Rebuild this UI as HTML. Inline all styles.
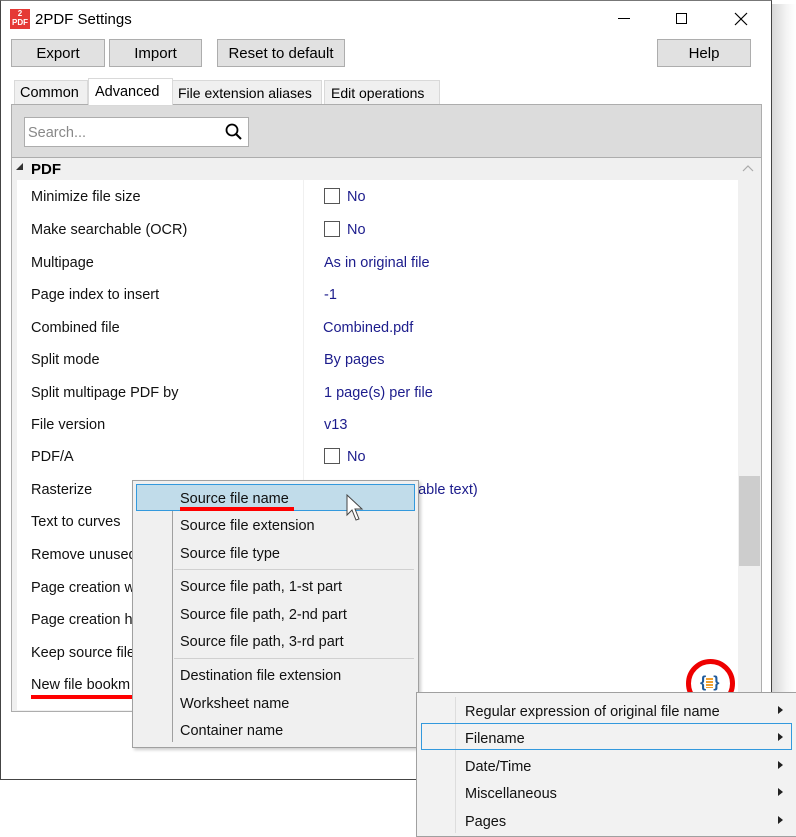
<!DOCTYPE html>
<html><head><meta charset="utf-8"><style>
*{box-sizing:border-box;margin:0;padding:0}
body{width:796px;height:837px;background:#fff;font-family:"Liberation Sans",sans-serif;font-size:14px;color:#000;position:relative;overflow:hidden}
.a{position:absolute;white-space:nowrap}
.win{left:0;top:0;width:772px;height:780px;border:1px solid #444;border-top-color:#777;background:#fff}
.shadow{left:772px;top:4px;width:24px;height:780px;background:linear-gradient(90deg,#d8d8d8,#f4f4f4 60%,#fff)}
.btn{background:#e1e1e1;border:1px solid #adadad;height:28px;top:39px;text-align:center;line-height:28px;font-size:15px}
.tab{top:80px;height:25px;background:#f0f0f0;border:1px solid #d9d9d9;line-height:24px;font-size:14.5px;padding:0 6px;overflow:hidden}
.row{left:31px;height:20px;line-height:22px;font-size:14.5px;color:#111}
.val{left:324px;height:20px;line-height:22px;font-size:14.5px;color:#1c1c8c}
.cb{width:16px;height:16px;border:1px solid #555;background:#fff;display:inline-block;vertical-align:-3px;margin-right:7px}
.mi{height:20px;line-height:22px;font-size:14.5px;color:#111}
.arr{width:0;height:0;border-left:5px solid #222;border-top:4px solid transparent;border-bottom:4px solid transparent}
</style></head><body>
<div class="a shadow"></div>
<div class="a win"></div>
<div class="a" style="left:10px;top:9px;width:20px;height:20px;background:#e53935;color:#fff;font-size:8px;line-height:9px;text-align:center;font-weight:bold">2<br>PDF</div>
<div class="a" style="left:35px;top:11px;font-size:15px">2PDF Settings</div>
<div class="a" style="left:618px;top:18px;width:12px;height:1px;background:#000"></div>
<div class="a" style="left:676px;top:13px;width:11px;height:11px;border:1px solid #000"></div>
<svg class="a" style="left:734px;top:12px" width="14" height="14"><path d="M1 1L13 13M13 1L1 13" stroke="#000" stroke-width="1.2"/></svg>
<div class="a btn" style="left:11px;width:94px">Export</div>
<div class="a btn" style="left:109px;width:93px">Import</div>
<div class="a btn" style="left:217px;width:128px">Reset to default</div>
<div class="a btn" style="left:657px;width:94px">Help</div>
<div class="a tab" style="left:14px;width:74px;padding:0 5px">Common</div>
<div class="a tab" style="left:88px;top:78px;height:28px;width:85px;background:#fff;z-index:2;line-height:27px">Advanced</div>
<div class="a tab" style="left:172px;width:150px;font-size:14px;padding:0 5px">File extension aliases</div>
<div class="a tab" style="left:324px;width:116px;font-size:14px">Edit operations</div>
<div class="a" style="left:11px;top:104px;width:751px;height:608px;border:1px solid #adadad;background:#f0f0f0"></div>
<div class="a" style="left:12px;top:105px;width:749px;height:53px;background:#dcdcdc;border-bottom:1px solid #adadad"></div>
<div class="a" style="left:24px;top:117px;width:225px;height:30px;background:#fff;border:1px solid #adadad;color:#888;font-size:14.5px;line-height:30px;padding-left:3px">Search...</div>
<svg class="a" style="left:225px;top:123px" width="18" height="18"><circle cx="7" cy="7" r="5.5" fill="none" stroke="#000" stroke-width="1.8"/><line x1="11" y1="11" x2="16" y2="16" stroke="#000" stroke-width="2"/></svg>
<div class="a" style="left:17px;top:180px;width:721px;height:530px;background:#fff"></div>
<div class="a" style="left:303px;top:180px;width:1px;height:530px;background:#f0f0f0"></div>
<div class="a" style="left:16px;top:163px;width:0;height:0;border-left:7px solid transparent;border-bottom:7px solid #333"></div>
<div class="a" style="left:31px;top:161px;font-weight:bold;font-size:15px">PDF</div>
<svg class="a" style="left:742px;top:165px" width="12" height="8"><path d="M1 6L6 1L11 6" fill="none" stroke="#aaa" stroke-width="1.2"/></svg>
<div class="a" style="left:739px;top:476px;width:21px;height:90px;background:#cdcdcd"></div>
<div class="a row" style="top:186px">Minimize file size</div>
<div class="a row" style="top:219px">Make searchable (OCR)</div>
<div class="a row" style="top:252px">Multipage</div>
<div class="a row" style="top:284px">Page index to insert</div>
<div class="a row" style="top:317px">Combined file</div>
<div class="a row" style="top:349px">Split mode</div>
<div class="a row" style="top:382px">Split multipage PDF by</div>
<div class="a row" style="top:414px">File version</div>
<div class="a row" style="top:446px">PDF/A</div>
<div class="a row" style="top:479px">Rasterize</div>
<div class="a row" style="top:511px">Text to curves</div>
<div class="a row" style="top:544px">Remove unused</div>
<div class="a row" style="top:577px">Page creation w</div>
<div class="a row" style="top:609px">Page creation h</div>
<div class="a row" style="top:642px">Keep source file</div>
<div class="a row" style="top:674px">New file bookm</div>
<div class="a" style="left:31px;top:695px;width:105px;height:4px;background:#f00"></div>
<div class="a val" style="top:186px"><span class="cb"></span>No</div>
<div class="a val" style="top:219px"><span class="cb"></span>No</div>
<div class="a val" style="top:252px">As in original file</div>
<div class="a val" style="top:284px">-1</div>
<div class="a val" style="top:317px;left:323px">Combined.pdf</div>
<div class="a val" style="top:349px">By pages</div>
<div class="a val" style="top:382px">1 page(s) per file</div>
<div class="a val" style="top:414px">v13</div>
<div class="a val" style="top:446px"><span class="cb"></span>No</div>
<div class="a val" style="top:479px;left:410px">hable text)</div>
<div class="a" style="left:686px;top:659px;width:49px;height:49px;border:5px solid #e00;border-radius:50%"></div>
<div class="a" style="left:700px;top:673px;font-size:16px;color:#1e5a9c;font-weight:bold;line-height:20px">{<span style="display:inline-block;width:7px;height:10px;background:repeating-linear-gradient(#f0a030 0 2px,transparent 2px 3px);vertical-align:-1px"></span>}</div>
<div class="a" style="left:132px;top:480px;width:287px;height:268px;background:#f0f0f0;border:1px solid #a0a0a0;box-shadow:2px 2px 3px rgba(0,0,0,.2)"></div>
<div class="a" style="left:172px;top:486px;width:1px;height:256px;background:#a0a0a0"></div>
<div class="a" style="left:136px;top:484px;width:279px;height:27px;background:#c1dcea;border:1px solid #3399dd"></div>
<div class="a" style="left:174px;top:569px;width:240px;height:1px;background:#d0d0d0"></div>
<div class="a" style="left:174px;top:658px;width:240px;height:1px;background:#d0d0d0"></div>
<div class="a mi" style="left:180px;top:488px">Source file name</div>
<div class="a" style="left:180px;top:507px;width:114px;height:4px;background:#f00"></div>
<div class="a mi" style="left:180px;top:515px">Source file extension</div>
<div class="a mi" style="left:180px;top:543px">Source file type</div>
<div class="a mi" style="left:180px;top:576px">Source file path, 1-st part</div>
<div class="a mi" style="left:180px;top:604px">Source file path, 2-nd part</div>
<div class="a mi" style="left:180px;top:631px">Source file path, 3-rd part</div>
<div class="a mi" style="left:180px;top:665px">Destination file extension</div>
<div class="a mi" style="left:180px;top:693px">Worksheet name</div>
<div class="a mi" style="left:180px;top:720px">Container name</div>
<svg class="a" style="left:346px;top:494px" width="20" height="30"><path d="M1 1 L1 21 L6 16 L10 26 L13 25 L9 15 L16 15 Z" fill="#fff" stroke="#444" stroke-width="1"/></svg>
<div class="a" style="left:416px;top:692px;width:381px;height:145px;background:#f2f2f2;border:1px solid #a0a0a0"></div>
<div class="a" style="left:455px;top:697px;width:1px;height:136px;background:#ddd"></div>
<div class="a" style="left:421px;top:723px;width:371px;height:27px;border:1px solid #3399dd"></div>
<div class="a mi" style="left:465px;top:701px">Regular expression of original file name</div>
<div class="a mi" style="left:465px;top:728px">Filename</div>
<div class="a mi" style="left:465px;top:756px">Date/Time</div>
<div class="a mi" style="left:465px;top:783px">Miscellaneous</div>
<div class="a mi" style="left:465px;top:811px">Pages</div>
<div class="a arr" style="left:778px;top:706px"></div>
<div class="a arr" style="left:778px;top:733px"></div>
<div class="a arr" style="left:778px;top:761px"></div>
<div class="a arr" style="left:778px;top:788px"></div>
<div class="a arr" style="left:778px;top:816px"></div>
</body></html>
